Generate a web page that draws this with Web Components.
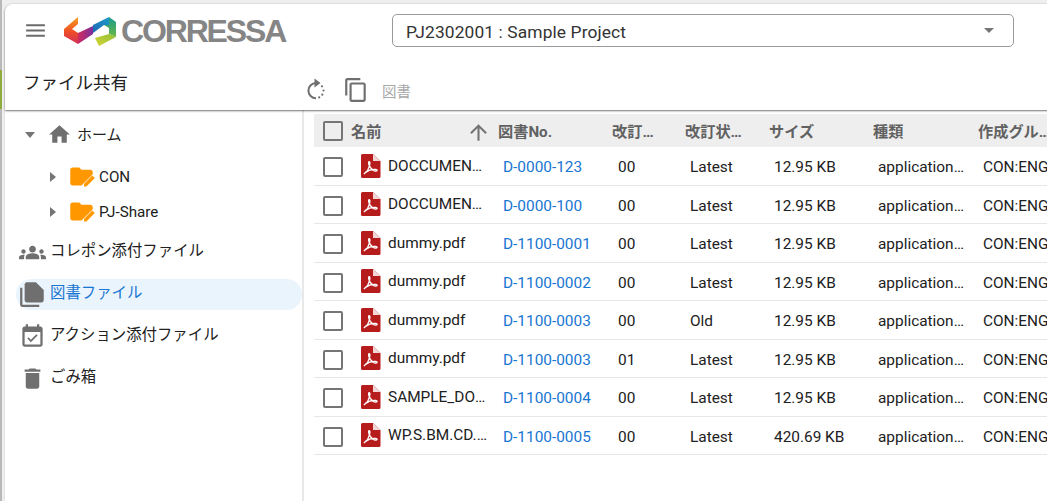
<!DOCTYPE html>
<html lang="ja">
<head>
<meta charset="utf-8">
<title>ファイル共有</title>
<style>
  html, body { margin: 0; height: 100%; overflow: hidden; background: #fff; }
  body {
    font-family: Roboto, "Noto Sans CJK JP", sans-serif;
    color: #212121;
  }
</style>
</head>
<body>
<app-shell>
  <app-header slot="header"></app-header>
  <side-nav slot="nav"></side-nav>
  <file-table slot="main"></file-table>
</app-shell>

<script>
const ICONS = {
  menu: '<path d="M3 18h18v-2H3v2zm0-5h18v-2H3v2zm0-7v2h18V6H3z"/>',
  home: '<path d="M10 20v-6h4v6h5v-8h3L12 3 2 12h3v8z"/>',
  group: '<path d="M12 12.75c1.63 0 3.07.39 4.24.9 1.08.48 1.76 1.56 1.76 2.73V18H6v-1.61c0-1.18.68-2.26 1.76-2.73 1.17-.52 2.61-.91 4.24-.91zM4 13c1.1 0 2-.9 2-2s-.9-2-2-2-2 .9-2 2 .9 2 2 2zm1.13 1.1c-.37-.06-.74-.1-1.13-.1-.99 0-1.93.21-2.78.58C.48 14.9 0 15.62 0 16.43V18h4.5v-1.61c0-.83.23-1.61.63-2.29zM20 13c1.1 0 2-.9 2-2s-.9-2-2-2-2 .9-2 2 .9 2 2 2zm4 3.43c0-.81-.48-1.53-1.22-1.85-.85-.37-1.79-.58-2.78-.58-.39 0-.76.04-1.13.1.4.68.63 1.46.63 2.29V18H24v-1.57zM12 6c1.66 0 3 1.34 3 3s-1.34 3-3 3-3-1.34-3-3 1.34-3 3-3z"/>',
  docs: '<path d="M3 6H1v15c0 1.1.9 2 2 2h15v-2H3V6z"/><path d="M15 1H7c-1.1 0-2 .9-2 2v14c0 1.1.9 2 2 2h13c1.1 0 2-.9 2-2V8l-7-7z"/>',
  event: '<path d="M16.53 11.06L15.47 10l-4.88 4.88-2.12-2.12-1.06 1.06L10.59 17l5.94-5.94zM19 3h-1V1h-2v2H8V1H6v2H5c-1.11 0-1.99.9-1.99 2L3 19c0 1.1.89 2 2 2h14c1.1 0 2-.9 2-2V5c0-1.1-.9-2-2-2zm0 16H5V8h14v11z"/>',
  trash: '<path d="M6 19c0 1.1.9 2 2 2h8c1.1 0 2-.9 2-2V7H6v12zM19 4h-3.5l-1-1h-5l-1 1H5v2h14V4z"/>',
  folder: '<path d="M10 4H4c-1.100 0-2 .9-2 2v12c0 1.100.9 2 2 2h8l10-10V8c0-1.100-.9-2-2-2h-8l-2-2z"/><path d="M14.200 20.800v-2.200l7.400-7.400 2.200 2.200-7.400 7.400z"/>',
  copy: '<path d="M16 1H4c-1.100 0-2 .9-2 2v14h2V3h12V1zm3 4H8c-1.100 0-2 .9-2 2v14c0 1.100.9 2 2 2h11c1.100 0 2-.9 2-2V7c0-1.100-.9-2-2-2zm0 16H8V7h11v14z"/>',
  sync: '<path d="M12 20.200A7.600 7.600 0 0 1 12 5" fill="none" stroke="currentColor" stroke-width="2"/><path d="M10.500 .5v9l6-4.500z"/><circle cx="18" cy="8.300" r="1.100"/><circle cx="19.500" cy="12.500" r="1.100"/><circle cx="18.300" cy="16.700" r="1.100"/><circle cx="15.200" cy="19.400" r="1.100"/>',
  arrowUp: '<path d="M4 12l1.410 1.410L11 7.830V20h2V7.830l5.580 5.590L20 12l-8-8-8 8z"/>',
};

const icon = (name, size, color) =>
  `<svg xmlns="http://www.w3.org/2000/svg" viewBox="0 0 24 24" width="${size}" height="${size}" fill="${color}" color="${color}" style="display:block;flex:none">${ICONS[name]}</svg>`;

// page frame: header on top, nav and table below
class AppShell extends HTMLElement {
  constructor() {
    super();
    this.attachShadow({mode: 'open'}).innerHTML = `
      <style>
        :host {
          display: block; height: 501px; box-sizing: border-box; overflow: hidden;
          padding: 4px 0 0 5px;
          background:
            linear-gradient(#8fab3c, #8fab3c) 0 70px / 2px 39px no-repeat,
            linear-gradient(#b9b9b9, #b9b9b9) 0 0 / 2px 100% no-repeat,
            #efefef;
        }
        .page { background: #fff; height: 100%; border-radius: 8px 0 0 0; display: grid; grid-template-rows: 106px 1fr; box-shadow: 0 0 2px rgba(0,0,0,.15); }
        .body { display: flex; min-height: 0; }
        .nav { width: 297px; flex: none; border-right: 2px solid #e8e8e8; }
        .main { flex: 1; min-width: 0; padding: 4px 0 0 10px; overflow: hidden; }
      </style>
      <div class="page">
        <slot name="header"></slot>
        <div class="body">
          <div class="nav"><slot name="nav"></slot></div>
          <div class="main"><slot name="main"></slot></div>
        </div>
      </div>`;
  }
}

class AppHeader extends HTMLElement {
  constructor() {
    super();
    this.attachShadow({mode: 'open'}).innerHTML = `
      <style>
        :host { display: block; position: relative; z-index: 1; border-radius: 8px 0 0 0; box-shadow: 0 1px 2px rgba(0,0,0,.55); background: #fff; }
        .top { display: flex; align-items: center; height: 53px; padding-left: 18px; }
        .logo { display: flex; align-items: center; margin-left: 16px; width: 328px; flex: none; }
        .word { font: 700 32px "Liberation Sans", sans-serif; color: #858585; letter-spacing: -2.15px; margin-left: 4px; line-height: 36px; }
        .select { width: 622px; height: 33px; box-sizing: border-box; border: 1px solid #9a9a9a; border-radius: 5px; display: flex; align-items: center; justify-content: space-between; padding: 0 19px 0 13px; font-size: 17.4px; color: #333; letter-spacing: .1px; }
        .select span { margin-top: 2px; }
        .caret { width: 0; height: 0; border: 5.5px solid transparent; border-top-color: #757575; border-bottom: 0; }
        .bottom { display: flex; height: 53px; }
        h1 { font: 400 17.5px Roboto, "Noto Sans CJK JP", sans-serif; color: #212121; margin: 0; width: 299px; flex: none; padding: 14px 0 0 18px; box-sizing: border-box; line-height: 24px; }
        .tools { display: flex; align-items: center; padding-top: 18px; height: 30px; }
        .tools span { font-size: 14.5px; color: #a8a8a8; margin-left: 13px; }
        .tools .copy { margin-left: 15px; }
      </style>
      <div class="top">
        ${icon('menu', 25, '#6b6b6b')}
        <div class="logo">
          <svg xmlns="http://www.w3.org/2000/svg" width="53" height="30" viewBox="0 0 53 30" style="flex:none">
            <defs>
              <linearGradient id="a" x1="0" y1="0" x2="0" y2="1"><stop offset="0" stop-color="#f7a01d"/><stop offset=".55" stop-color="#ee4d27"/><stop offset="1" stop-color="#d3305a"/></linearGradient>
              <linearGradient id="b" x1="0" y1="0" x2="1" y2="0"><stop offset="0" stop-color="#d22a5f"/><stop offset="1" stop-color="#7a2f9c"/></linearGradient>
              <linearGradient id="c" x1="0" y1="1" x2="1" y2="0"><stop offset="0" stop-color="#1f66b4"/><stop offset="1" stop-color="#1b9ac9"/></linearGradient>
              <linearGradient id="e" x1="0" y1="0" x2="0" y2="1"><stop offset="0" stop-color="#179a8f"/><stop offset="1" stop-color="#6bb843"/></linearGradient>
              <linearGradient id="d" x1="0" y1="1" x2="1" y2="0"><stop offset="0" stop-color="#d8d430"/><stop offset="1" stop-color="#8fc03c"/></linearGradient>
            </defs>
            <path d="M0 13 L14 1 L14 8 L8 13 L14 17 L14 28 L0 20 Z" fill="url(#a)"/>
            <path d="M14 17 L29 10 L29 18 L14 28 Z" fill="url(#b)"/>
            <path d="M29 9 L45 1 L45 9 L40 9 L29 17 Z" fill="url(#c)"/>
            <path d="M45 1 L52 6 L52 21 L45 18 L45 12 L40 9 L45 9 Z" fill="url(#e)"/>
            <path d="M31 22 L45 18 L52 21 L35 30 Z" fill="url(#d)"/>
          </svg>
          <span class="word">CORRESSA</span>
        </div>
        <div class="select"><span>PJ2302001 : Sample Project</span><i class="caret"></i></div>
      </div>
      <div class="bottom">
        <h1>ファイル共有</h1>
        <div class="tools">
          ${icon('sync', 24, '#6f6f6f')}
          <div class="copy">${icon('copy', 26, '#6f6f6f')}</div>
          <span>図書</span>
        </div>
      </div>`;
  }
}

class TreeItem extends HTMLElement {
  constructor() {
    super();
    this.attachShadow({mode: 'open'}).innerHTML = `
      <style>
        :host { display: flex; align-items: center; height: 35px; font-size: 15.2px; color: #212121; padding-left: 45px; }
        .tri { width: 0; height: 0; border: 5px solid transparent; border-left: 6px solid #757575; border-right: 0; margin-right: 12px; }
        .label { margin-left: 4px; }
      </style>
      <i class="tri"></i>${icon('folder', 27, '#ff9800')}<span class="label"><slot></slot></span>`;
  }
}

class NavItem extends HTMLElement {
  constructor() {
    super();
    const name = this.getAttribute('icon');
    const size = this.getAttribute('size') || 26;
    this.attachShadow({mode: 'open'}).innerHTML = `
      <style>
        :host { display: flex; align-items: center; height: 31px; margin: 0 0 11px 11px; padding-left: 3px; font-size: 15.4px; line-height: 20px; color: #212121; border-radius: 16px; }
        :host([active]) { background: #eaf4fd; color: #1976d2; }
        .ic { width: 27px; flex: none; display: flex; justify-content: center; }
        .t { margin: -4px 0 0 4px; }
      </style>
      <div class="ic">${icon(name, size, '#6f6f6f')}</div><span class="t"><slot></slot></span>`;
  }
}

class SideNav extends HTMLElement {
  constructor() {
    super();
    this.attachShadow({mode: 'open'}).innerHTML = `
      <style>
        :host { display: block; padding-top: 7px; }
        .home { display: flex; align-items: center; height: 35px; padding-left: 20px; font-size: 15px; margin-bottom: 7px; }
        .down { width: 0; height: 0; border: 5.500px solid transparent; border-top: 6px solid #757575; border-bottom: 0; margin-right: 12px; }
        .home span { margin-left: 5px; margin-top: -2px; }
        .tree { margin-bottom: 8px; }
      </style>
      <div class="home"><i class="down"></i>${icon('home', 25, '#6f6f6f')}<span>ホーム</span></div>
      <div class="tree">
        <tree-item>CON</tree-item>
        <tree-item>PJ-Share</tree-item>
      </div>
      <div>
        <nav-item icon="group" size="27">コレポン添付ファイル</nav-item>
        <nav-item icon="docs" size="27" active>図書ファイル</nav-item>
        <nav-item icon="event" size="27">アクション添付ファイル</nav-item>
        <nav-item icon="trash" size="27">ごみ箱</nav-item>
      </div>`;
  }
}

const COLS = '45px 139px 114px 73px 84px 104px 105px 90px';

class CheckBox extends HTMLElement {
  constructor() {
    super();
    this.attachShadow({mode: 'open'}).innerHTML = `
      <style>
        :host { display: block; width: 20px; height: 20px; box-sizing: border-box; border: 2px solid #757575; border-radius: 2px; }
      </style>`;
  }
}

class PdfIcon extends HTMLElement {
  constructor() {
    super();
    this.attachShadow({mode: 'open'}).innerHTML = `
      <style>:host { display: block; width: 20px; height: 24px; }</style>
      <svg xmlns="http://www.w3.org/2000/svg" width="20" height="24" viewBox="0 0 20 24" style="display:block">
        <path d="M1.500 0H12l7.500 7v15.500a1.500 1.500 0 0 1-1.500 1.500h-16.500A1.500 1.500 0 0 1 0 22.500V1.500A1.500 1.500 0 0 1 1.500 0z" fill="#b71c1c"/>
        <path d="M12 0l7.500 7h-7.500z" fill="#f3d6d6"/>
        <path d="M3.500 19.500c2.500-1.500 4.500-5 5.300-9.500.2-1.300-.1-2.500-.8-2.300-.8.300-.4 2.800 1.300 5.600 1.500 2.300 3.600 3.800 5.700 3.700 1.500-.1 1.400-1.500-.2-1.600-3-.2-7.500.8-10.300 3-1.100 1-1.400 1.500-1 1.100z" fill="none" stroke="#fff" stroke-width="1.400"/>
      </svg>`;
  }
}

class FileTable extends HTMLElement {
  constructor() {
    super();
    this.attachShadow({mode: 'open'});
  }
  connectedCallback() {
    const rows = [
      ['DOCCUMENT_SAMPLE.pdf', 'D-0000-123', '00', 'Latest', '12.95 KB'],
      ['DOCCUMENT_SAMPLE.pdf', 'D-0000-100', '00', 'Latest', '12.95 KB'],
      ['dummy.pdf', 'D-1100-0001', '00', 'Latest', '12.95 KB'],
      ['dummy.pdf', 'D-1100-0002', '00', 'Latest', '12.95 KB'],
      ['dummy.pdf', 'D-1100-0003', '00', 'Old', '12.95 KB'],
      ['dummy.pdf', 'D-1100-0003', '01', 'Latest', '12.95 KB'],
      ['SAMPLE_DOCUMENT.pdf', 'D-1100-0004', '00', 'Latest', '12.95 KB'],
      ['WP.S.BM.CD.0001.pdf', 'D-1100-0005', '00', 'Latest', '420.69 KB'],
    ];
    const body = rows.map(r => `
      <div class="row">
        <div class="cb"><check-box></check-box></div>
        <div class="name"><pdf-icon></pdf-icon><span class="el">${r[0]}</span></div>
        <div class="no">${r[1]}</div>
        <div class="c rev">${r[2]}</div>
        <div class="c">${r[3]}</div>
        <div class="c">${r[4]}</div>
        <div class="c el type">application/pdf</div>
        <div class="c clip">CON:ENG</div>
      </div>`).join('');
    this.shadowRoot.innerHTML = `
      <style>
        :host { display: block; width: 758px; font-size: 15.4px; color: #212121; }
        .head, .row { display: grid; grid-template-columns: ${COLS}; align-items: center; }
        .head { height: 33px; background: #eee; font-weight: 700; font-size: 15.2px; color: #616161; }
        .row { height: 38.500px; border-bottom: 1px solid #e6e6e6; box-sizing: border-box; padding-top: 3px; }
        .cb { padding-left: 9px; }
        .head .sort { display: flex; align-items: center; justify-content: space-between; padding-right: 7px; }
        .sort span { margin: -2px 0 0 -8px; }
        .sort svg { margin-top: 3px; }
        .name { display: flex; align-items: center; padding-left: 2px; }
        .name pdf-icon { margin-top: -3px; flex: none; }
        .name span { margin: -3px 0 0 7px; width: 101px; }
        .el { overflow: hidden; white-space: nowrap; text-overflow: ellipsis; }
        .no { color: #1976d2; padding-left: 5px; }
        .c { padding-left: 5px; min-width: 0; }
        .rev { padding-left: 6px; }
        .type { padding-right: 9px; }
        .clip { overflow: hidden; white-space: nowrap; }
        .h { white-space: nowrap; overflow: hidden; text-overflow: ellipsis; padding-right: 24px; margin-top: -2px; }
        .h:last-child { padding-right: 16px; }
      </style>
      <div class="head">
        <div class="cb"><check-box></check-box></div>
        <div class="sort"><span>名前</span>${icon('arrowUp', 25, '#757575')}</div>
        <div class="h">図書No.</div>
        <div class="h">改訂番号</div>
        <div class="h">改訂状態名</div>
        <div class="h">サイズ</div>
        <div class="h">種類</div>
        <div class="h">作成グループ</div>
      </div>
      ${body}`;
  }
}

customElements.define('app-shell', AppShell);
customElements.define('app-header', AppHeader);
customElements.define('tree-item', TreeItem);
customElements.define('nav-item', NavItem);
customElements.define('side-nav', SideNav);
customElements.define('check-box', CheckBox);
customElements.define('pdf-icon', PdfIcon);
customElements.define('file-table', FileTable);
</script>
</body>
</html>
